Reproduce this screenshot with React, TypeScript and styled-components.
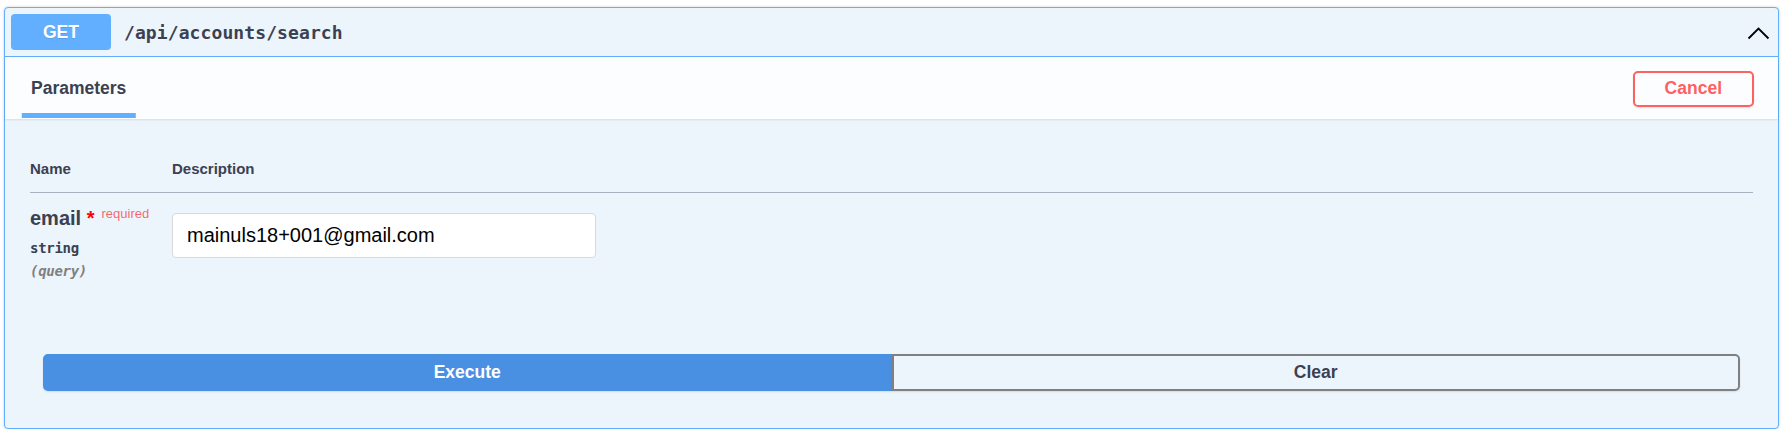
import React from "react";
import styled, { createGlobalStyle } from "styled-components";

const GlobalStyle = createGlobalStyle`
  html, body {
    margin: 0;
    background: #ffffff;
  }
  body {
    padding: 7px 7px 0 4px;
    font-family: "Liberation Sans", Arial, sans-serif;
    overflow: hidden;
  }
`;

const OpBlock = styled.section`
  border: 1px solid #61affe;
  border-radius: 4px;
  background: #ecf4fc;
  box-shadow: 0 0 3px rgba(0, 0, 0, 0.19);
`;

const Summary = styled.div`
  display: flex;
  align-items: center;
  padding: 6px 8px 6px 6px;
  border-bottom: 1px solid #61affe;
`;

const Method = styled.span`
  width: 100px;
  height: 36px;
  display: flex;
  align-items: center;
  justify-content: center;
  border-radius: 4px;
  background: #61affe;
  color: #fff;
  font-size: 17.5px;
  font-weight: 700;
  text-shadow: 0 1px 0 rgba(0, 0, 0, 0.1);
`;

const Path = styled.span`
  flex: 1;
  padding: 0 13px;
  font-family: "DejaVu Sans Mono", monospace;
  font-size: 18px;
  font-weight: 700;
  letter-spacing: 0.1px;
  color: #3b4151;
`;

const Arrow = styled.svg`
  display: block;
  margin-top: 2px;
`;

const SectionHeader = styled.div`
  height: 62px;
  box-sizing: border-box;
  display: flex;
  align-items: center;
  justify-content: space-between;
  padding: 0 24px 0 26px;
  background: rgba(255, 255, 255, 0.8);
  box-shadow: 0 1px 2px rgba(0, 0, 0, 0.1);
`;

const TabTitle = styled.h4`
  margin: 0;
  font-size: 17.5px;
  font-weight: 700;
  color: #3b4151;

  span {
    position: relative;
    display: inline-block;
    line-height: 20px;
  }

  span::after {
    content: "";
    position: absolute;
    left: 50%;
    bottom: -20px;
    width: 120%;
    height: 5px;
    transform: translateX(-50%);
    background: #61affe;
  }
`;

const OutlineButton = styled.button<{ $tone: string }>`
  height: 36px;
  padding: 0 30px;
  background: transparent;
  border: 2px solid ${({ $tone }) => $tone};
  border-radius: 5px;
  color: ${({ $tone }) => $tone};
  font-family: "Liberation Sans", Arial, sans-serif;
  font-size: 17.5px;
  font-weight: 700;
  box-shadow: 0 1px 2px rgba(0, 0, 0, 0.1);
  margin-top: 1px;
`;

const TableContainer = styled.div`
  padding: 26px 25px 24px;
`;

const ParamGrid = styled.div`
  display: grid;
  grid-template-columns: 142px 1fr;
`;

const HeadCell = styled.div`
  padding: 15px 0 14px;
  line-height: 18px;
  font-size: 15px;
  font-weight: 700;
  color: #3b4151;
  border-bottom: 1px solid #a9b1c1;
`;

const NameCell = styled.div`
  padding-top: 13px;
`;

const ParamName = styled.div`
  font-size: 20px;
  line-height: 24px;
  font-weight: 700;
  color: #3b4151;
`;

const Star = styled.span`
  color: #ff0000;
  font-size: 20px;
`;

const Required = styled.span`
  position: relative;
  top: -7px;
  padding-left: 7px;
  font-size: 13px;
  font-weight: 400;
  color: rgba(255, 0, 0, 0.6);
`;

const Mono = styled.div<{ $muted?: boolean }>`
  margin-top: ${({ $muted }) => ($muted ? "5px" : "6px")};
  line-height: 18px;
  font-family: "DejaVu Sans Mono", monospace;
  font-size: 14px;
  letter-spacing: -0.3px;
  font-weight: 700;
  font-style: ${({ $muted }) => ($muted ? "italic" : "normal")};
  color: ${({ $muted }) => ($muted ? "#808080" : "#3b4151")};
`;

const DescCell = styled.div`
  padding-top: 20px;
`;

const TextInput = styled.input`
  display: block;
  width: 424px;
  height: 45px;
  box-sizing: border-box;
  padding: 0 14px;
  border: 1px solid #d9d9d9;
  border-radius: 4px;
  background: #fff;
  font-family: "Liberation Sans", Arial, sans-serif;
  font-size: 20px;
  color: #000;
  outline: none;
`;

const ExecuteWrapper = styled.div`
  display: flex;
  padding: 50px 38px 37px;
`;

const GroupButton = styled.button<{ $primary?: boolean }>`
  flex: 1;
  height: 37px;
  border: 2px solid ${({ $primary }) => ($primary ? "#4990e2" : "#808080")};
  border-radius: ${({ $primary }) => ($primary ? "5px 0 0 5px" : "0 5px 5px 0")};
  background: ${({ $primary }) => ($primary ? "#4990e2" : "transparent")};
  color: ${({ $primary }) => ($primary ? "#fff" : "#3b4151")};
  font-family: "Liberation Sans", Arial, sans-serif;
  font-size: 17.5px;
  font-weight: 700;
  box-shadow: 0 1px 2px rgba(0, 0, 0, 0.1);
`;

const App = () => {
  const [email, setEmail] = React.useState("mainuls18+001@gmail.com");

  return (
    <>
      <GlobalStyle />
      <OpBlock>
        <Summary>
          <Method>GET</Method>
          <Path>/api/accounts/search</Path>
          <Arrow width="23" height="13" viewBox="0 0 23 13" aria-hidden="true">
            <polyline
              points="1.5,11.5 11.5,1.5 21.5,11.5"
              fill="none"
              stroke="#000"
              strokeWidth="1.8"
            />
          </Arrow>
        </Summary>

        <SectionHeader>
          <TabTitle>
            <span>Parameters</span>
          </TabTitle>
          <OutlineButton $tone="#ff6060">Cancel</OutlineButton>
        </SectionHeader>

        <TableContainer>
          <ParamGrid>
            <HeadCell>Name</HeadCell>
            <HeadCell>Description</HeadCell>
            <NameCell>
              <ParamName>
                email<Star>&nbsp;*</Star>
                <Required>required</Required>
              </ParamName>
              <Mono>string</Mono>
              <Mono $muted>(query)</Mono>
            </NameCell>
            <DescCell>
              <TextInput value={email} onChange={(e) => setEmail(e.target.value)} />
            </DescCell>
          </ParamGrid>
        </TableContainer>

        <ExecuteWrapper>
          <GroupButton $primary>Execute</GroupButton>
          <GroupButton>Clear</GroupButton>
        </ExecuteWrapper>
      </OpBlock>
    </>
  );
};

export default App;
